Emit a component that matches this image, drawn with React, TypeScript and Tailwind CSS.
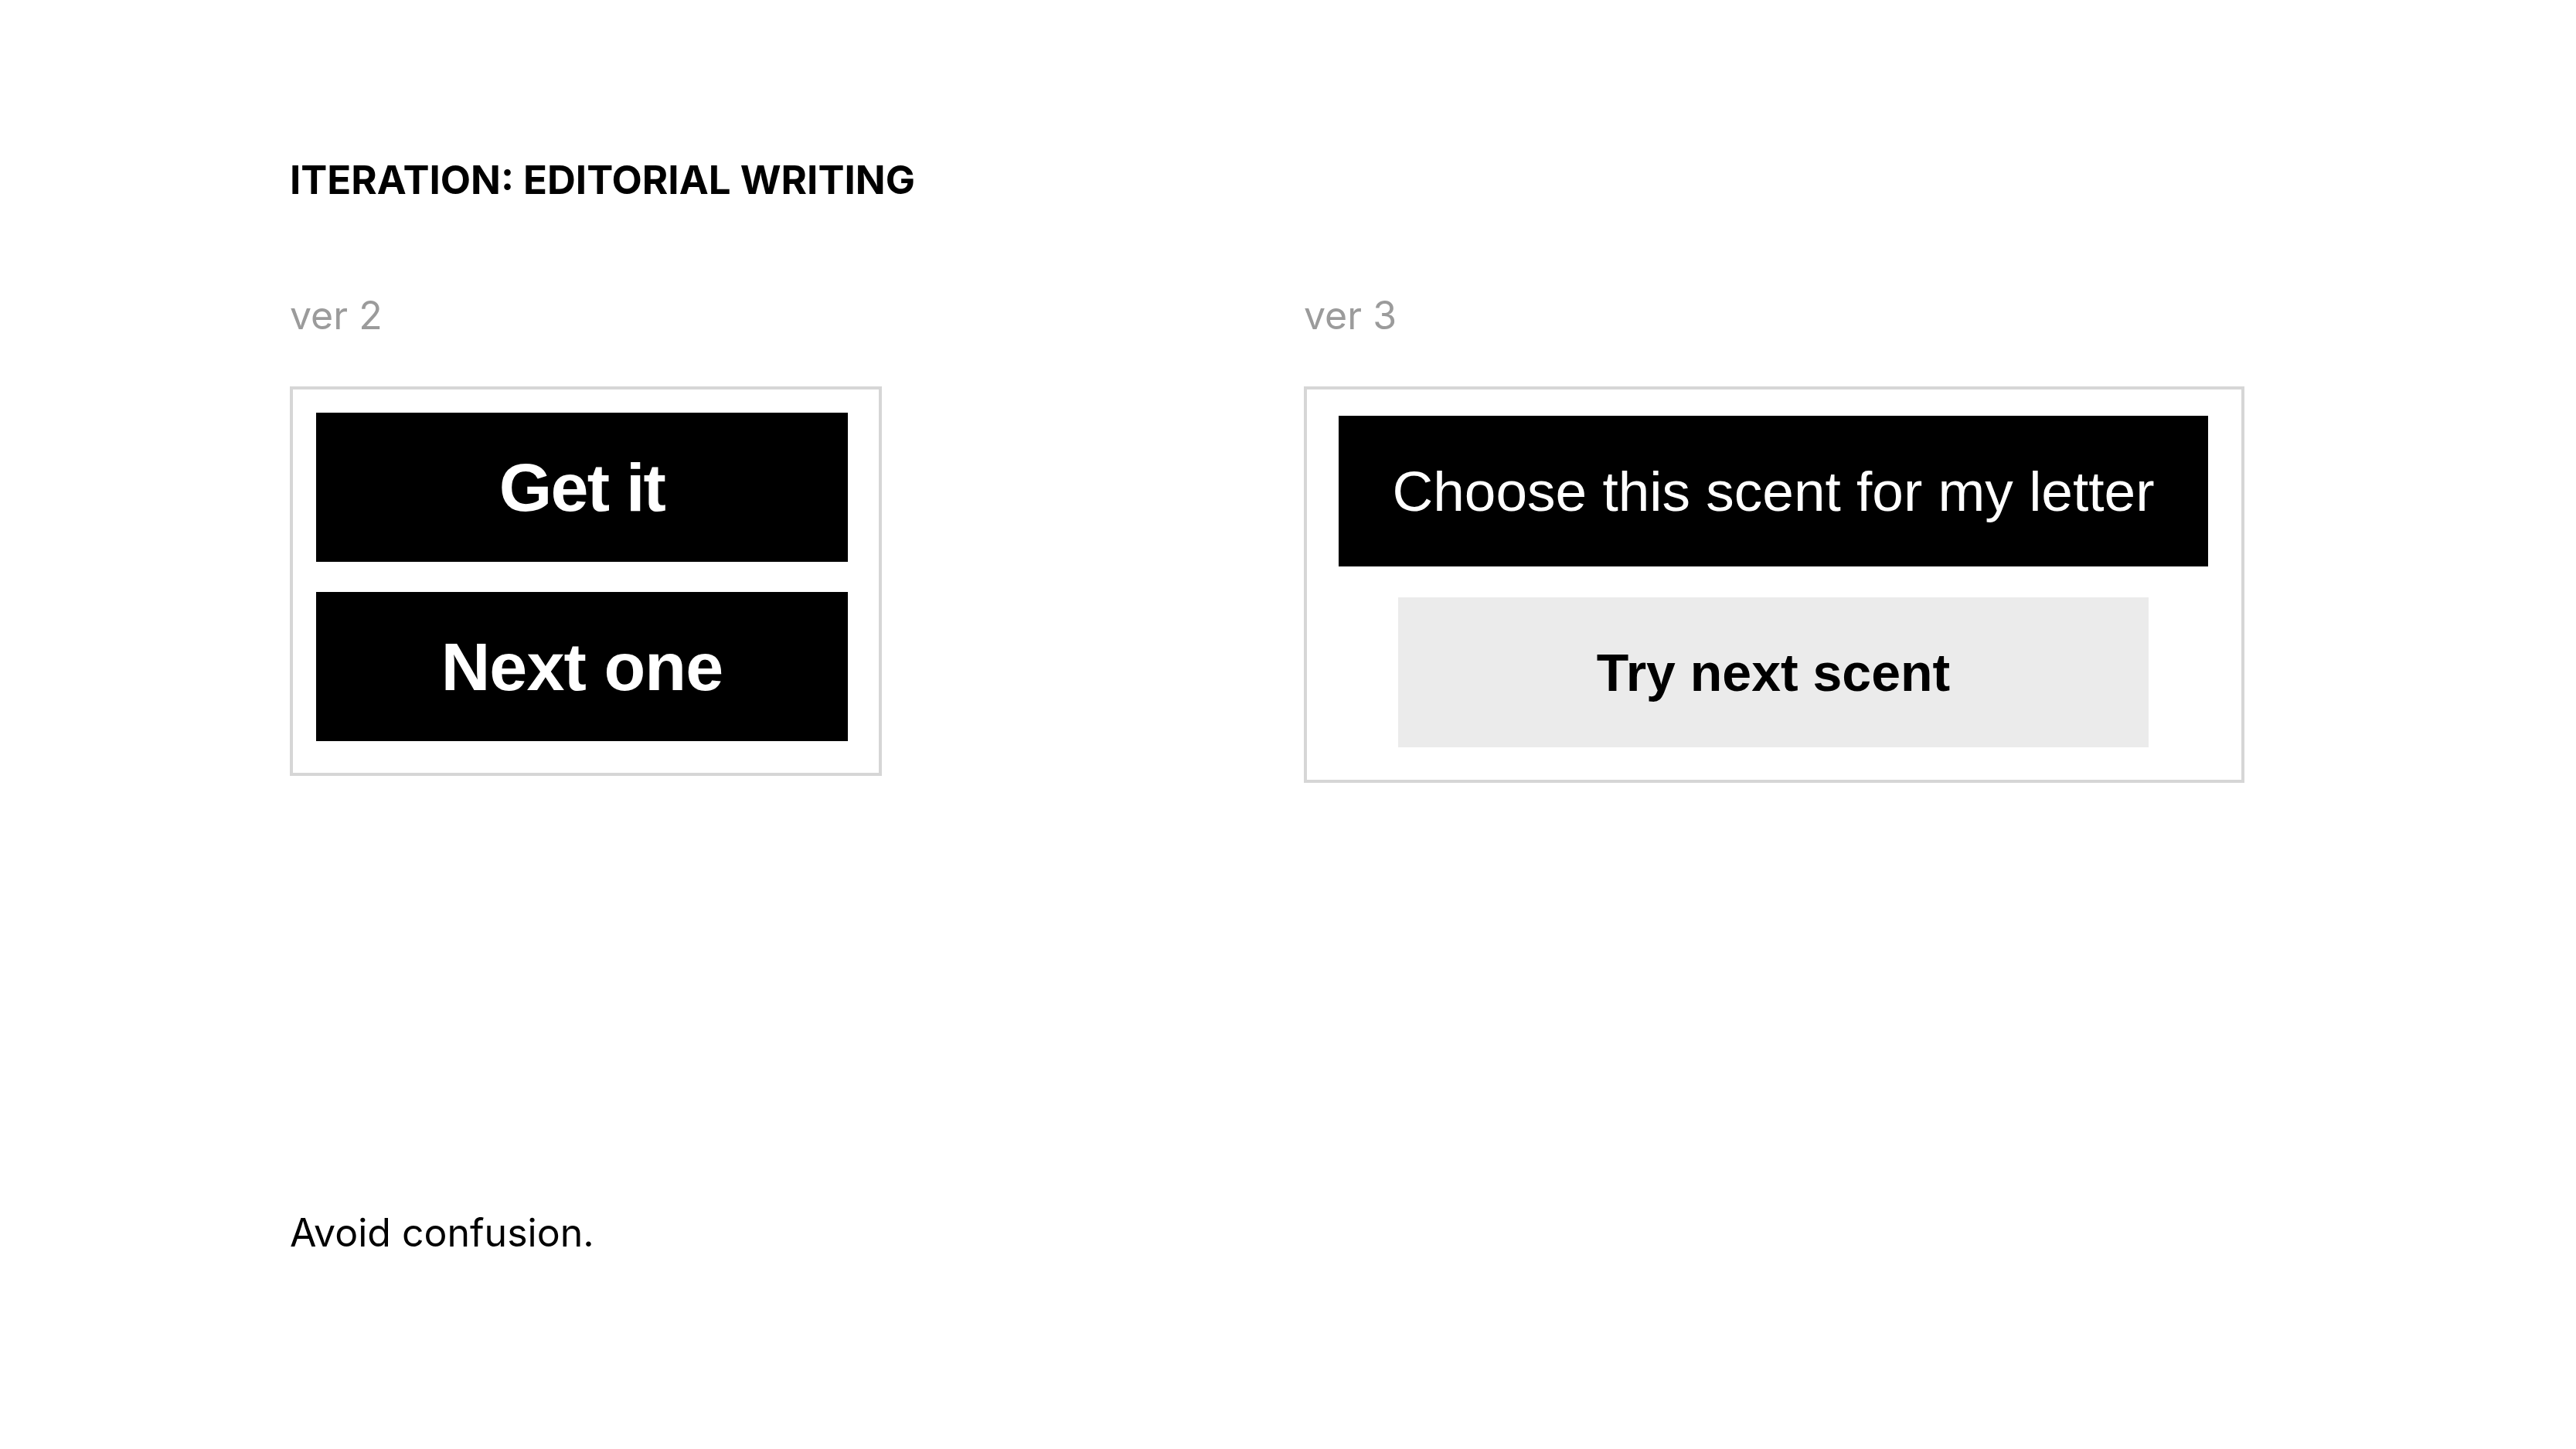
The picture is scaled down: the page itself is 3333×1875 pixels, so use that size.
import React from "react";

// ---------------------------------------------------------------------------
// Slide: button copy iterations, side by side
// ---------------------------------------------------------------------------

const mockFont = { fontFamily: '"Liberation Sans", Arial, sans-serif' };

function VersionLabel({ children }: { children: React.ReactNode }) {
  return (
    <div className="text-[50px] leading-none text-[#9b9b9b] font-['Inter',sans-serif]">
      {children}
    </div>
  );
}

export default function App() {
  return (
    <div className="w-[3333px] h-[1875px] bg-white pl-[375px] pt-[207px] font-['Inter',sans-serif] text-black">
      <h1 className="text-[51px] leading-none font-bold">
        ITERATION: EDITORIAL WRITING
      </h1>

      <div className="flex gap-[546px] mt-[125px]">
        {/* ver 2 */}
        <div className="flex flex-col gap-[67px]">
          <VersionLabel>ver 2</VersionLabel>
          <div className="w-[766px] h-[504px] border-4 border-[#d6d6d6] pt-[30px] pl-[30px] pr-[40px] pb-[41px] flex flex-col gap-[39px]">
            <div
              className="h-[193px] bg-black text-white flex items-center justify-center text-[88px] leading-none font-bold tracking-[-0.02em]"
              style={mockFont}
            >
              Get it
            </div>
            <div
              className="h-[193px] bg-black text-white flex items-center justify-center text-[88px] leading-none font-bold tracking-[-0.01em]"
              style={mockFont}
            >
              Next one
            </div>
          </div>
        </div>

        {/* ver 3 */}
        <div className="flex flex-col gap-[67px]">
          <VersionLabel>ver 3</VersionLabel>
          <div className="w-[1217px] h-[513px] border-4 border-[#d6d6d6] pt-[34px] pl-[41px] pr-[43px] pb-[42px] flex flex-col items-center gap-[40px]">
            <div
              className="w-[1125px] h-[195px] bg-black text-white flex items-center justify-center text-[73px] leading-none"
              style={mockFont}
            >
              Choose this scent for my letter
            </div>
            <div
              className="w-[971px] h-[194px] bg-[#ebebeb] text-black flex items-center justify-center text-[68px] leading-none font-bold"
              style={mockFont}
            >
              Try next scent
            </div>
          </div>
        </div>
      </div>

      <p className="mt-[557px] text-[50px] leading-none">Avoid confusion.</p>
    </div>
  );
}
